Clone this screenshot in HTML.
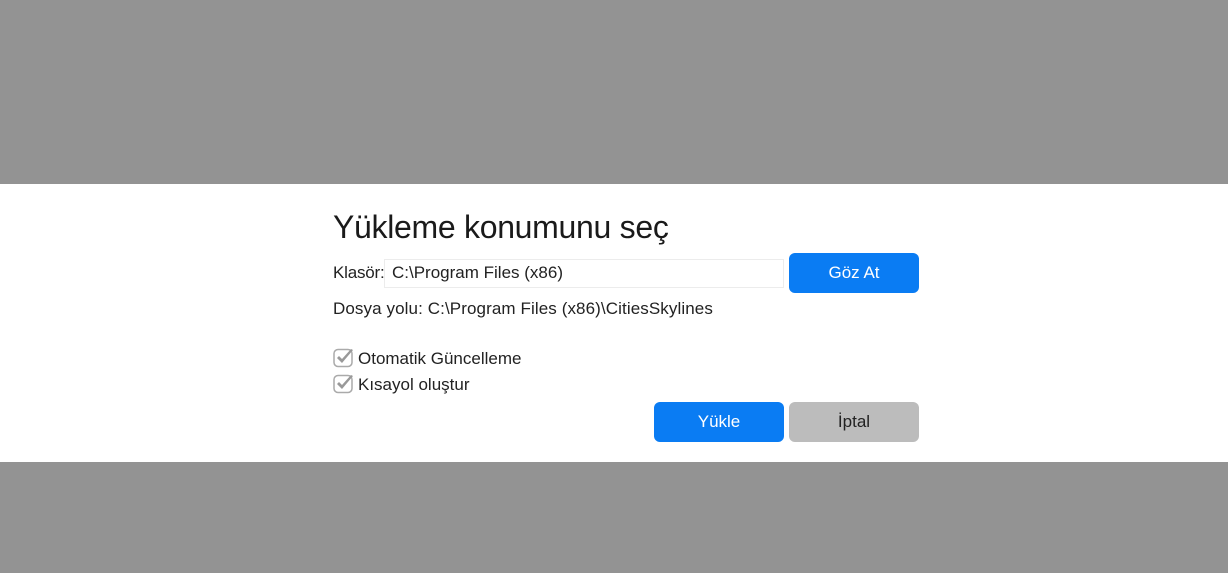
<!DOCTYPE html>
<html><head><style>
body{margin:0;width:1228px;height:573px;background:#939393;font-family:"Liberation Sans",sans-serif;position:relative;overflow:hidden}
.p{position:absolute;left:0;top:184px;width:1228px;height:278px;background:#fff}
.a{position:absolute;color:#222;white-space:nowrap}
.btn{position:absolute;border-radius:6px;color:#fff;font-size:17px;text-align:center;line-height:40px;height:40px;width:130px}
.cb{position:absolute;left:333px;width:22px;height:20px}
</style></head><body>
<div class="p"></div>
<div class="a" style="left:333px;top:209px;font-size:32px;letter-spacing:-0.3px;color:#1a1a1a">Yükleme konumunu seç</div>
<div class="a" style="left:333px;top:263px;font-size:17px;letter-spacing:-0.2px">Klasör:</div>
<div style="position:absolute;left:384px;top:259px;width:398px;height:27px;border:1px solid #ececec"></div>
<div class="a" style="left:392px;top:263px;font-size:17px">C:\Program Files (x86)</div>
<div class="btn" style="left:789px;top:253px;background:#0a7cf3">Göz At</div>
<div class="a" style="left:333px;top:299px;font-size:17px;letter-spacing:0.1px">Dosya yolu: C:\Program Files (x86)\CitiesSkylines</div>
<svg class="cb" style="top:348px" viewBox="0 0 22 20"><rect x="1" y="1.5" width="18" height="17" rx="4" fill="none" stroke="#aaa" stroke-width="1.5"/><path d="M4 10 L9 15 L20 2 L18 1 L9 11 L6 8 Z" fill="#999"/></svg>
<div class="a" style="left:358px;top:349px;font-size:17px">Otomatik Güncelleme</div>
<svg class="cb" style="top:374px" viewBox="0 0 22 20"><rect x="1" y="1.5" width="18" height="17" rx="4" fill="none" stroke="#aaa" stroke-width="1.5"/><path d="M4 10 L9 15 L20 2 L18 1 L9 11 L6 8 Z" fill="#999"/></svg>
<div class="a" style="left:358px;top:375px;font-size:17px">Kısayol oluştur</div>
<div class="btn" style="left:654px;top:402px;background:#0a7cf3">Yükle</div>
<div class="btn" style="left:789px;top:402px;background:#bcbcbc;color:#222">İptal</div>
</body></html>
